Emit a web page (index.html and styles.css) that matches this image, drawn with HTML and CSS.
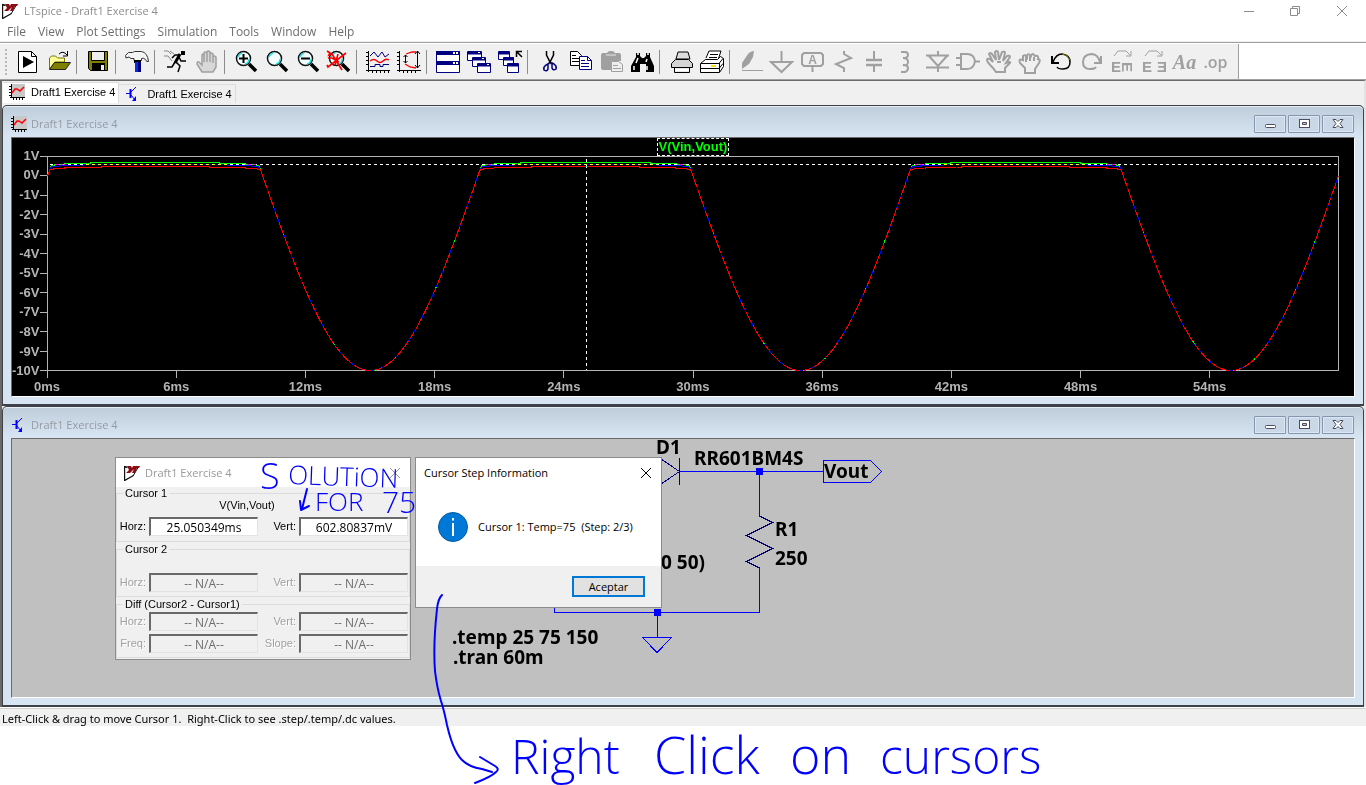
FILE: index.html
```html
<!DOCTYPE html>
<html lang="en">
<head>
<meta charset="utf-8">
<title>LTspice - Draft1 Exercise 4</title>
<link rel="stylesheet" href="styles.css">
</head>
<body>
<svg class="defs" aria-hidden="true">
  <symbol id="logo" viewBox="0 0 16 16"><path d="M.5 1v14.500l9-5M.5 1.500l3 1" fill="none" stroke="#111" stroke-width="1.400"/><path d="M9 11l6-10" stroke="#111"/><path d="M3 1h4l1 2 1-2h7l-1 2h-2l-2 5H8l2-4-4 4H2l3-3z" fill="#8b0a14"/></symbol>
  <symbol id="wave" viewBox="0 0 16 16"><path d="M2 0h14v13H2z" fill="#c8c8c8"/><path d="M2.500 0v14M1 13.500h15M0 2.500h2M0 5.500h2M0 8.500h2M0 11.500h2M4.500 14v2M7.500 14v2M10.500 14v2M13.500 14v2" stroke="#000" fill="none" shape-rendering="crispEdges"/><path d="M3 9l3-4 2 0 3 2 4-4" stroke="#f00" stroke-width="1.500" fill="none"/></symbol>
  <symbol id="bjt" viewBox="0 0 16 16"><path d="M1 7.500h4M6 6l5-5M6 9l4 5" stroke="#00f" fill="none"/><path d="M5.500 3v9" stroke="#00f" stroke-width="2"/><path d="M11 10v5H7z" fill="#00f"/></symbol>
  <symbol id="lens" viewBox="0 0 24 24"><circle cx="9.500" cy="8.500" r="7" fill="#f4ffff" stroke="#111" stroke-width="1.500"/><path d="M4 7q1-3 4-4M11 14q4-1 4-5" stroke="#20e0e8" stroke-width="1.500" fill="none"/><path d="M15 14l7 7" stroke="#000" stroke-width="3.500"/></symbol>
  <symbol id="min" viewBox="0 0 16 14"><rect x="3.500" y="7.500" width="10" height="3" rx="1" fill="#fff" stroke="#4a4d60"/></symbol>
  <symbol id="max" viewBox="0 0 16 14"><rect x="3.500" y="2.500" width="10" height="8" fill="#fff" stroke="#4a4d60"/><path d="M6.500 5.500h4v2h-4z" fill="#bcc8d8" stroke="#4a4d60"/></symbol>
  <symbol id="cls" viewBox="0 0 16 14"><path d="M3 2.500h3l2 2 2-2h3l-3 4 3 4h-3l-2-2-2 2H3l3-4z" fill="#fff" stroke="#4a4d60"/></symbol>
  <symbol id="cross" viewBox="0 0 12 12"><path d="M1 1l10 10M11 1L1 11" stroke="currentColor" fill="none"/></symbol>
</svg>

<div class="app">
  <header class="titlebar">
    <svg class="logo"><use href="#logo"/></svg>
    <h1>LTspice - Draft1 Exercise 4</h1>
    <div class="syscontrols">
      <button aria-label="Minimize"><svg viewBox="0 0 12 12"><path d="M1 6.500h10" stroke="currentColor"/></svg></button>
      <button aria-label="Restore"><svg viewBox="0 0 12 12"><path d="M3.500 3V1.500h7v7H9M1.500 3.500h7v7h-7z" fill="none" stroke="currentColor"/></svg></button>
      <button aria-label="Close"><svg><use href="#cross"/></svg></button>
    </div>
  </header>
  <nav class="menu">
    <button>File</button><button>View</button><button>Plot Settings</button><button>Simulation</button><button>Tools</button><button>Window</button><button>Help</button>
  </nav>

  <div class="toolrow">
  <div class="toolbar" role="toolbar" aria-label="Main">
    <span class="grip"></span>
    <button aria-label="Run file"><svg viewBox="0 0 24 24"><path d="M2.500 1.500h13l5 5v16h-18z" fill="#fff" stroke="#000"/><path d="M15.500 1.500v5h5" fill="none" stroke="#000"/><path d="M7 6l11 6-11 6z"/></svg></button>
    <button aria-label="Open"><svg viewBox="0 0 24 24"><path d="M2.500 19V8l2-2h4l2 2h7v4H8z" fill="#ffff9a" stroke="#777700"/><path d="M2.500 19.500l5-7h16l-5 7z" fill="#808000" stroke="#222"/><path d="M12 4q4-4 8 1M20.500 1v5H16" fill="none" stroke="#000"/></svg></button>
    <i></i>
    <button aria-label="Save"><svg viewBox="0 0 24 24"><path d="M2.500 1.500h19v19h-17l-2-2z" fill="#808000" stroke="#000"/><path d="M5.500 1.500h13v9h-13z" fill="#eee" stroke="#000"/><path d="M6 13h13v8H6z"/><path d="M15 15h3v5h-3z" fill="#eee"/></svg></button>
    <i></i>
    <button aria-label="Control panel"><svg viewBox="0 0 24 24"><path d="M.5 5.500l3-3h4l2-1h7q6 1 7 10-2 1-3-2-2-2-4-1v2H9v-2H6L4 7 1 8z" fill="#f4f4f4" stroke="#333"/><path d="M9 10h7v3H9z"/><path d="M10 12h6v10h-6z" fill="#0030e0"/><path d="M13 12h3v10h-3z" fill="#000080"/></svg></button>
    <i></i>
    <button aria-label="Run"><svg viewBox="0 0 24 24"><path d="M17 1h4v4h-4z"/><path d="M16 4l-5 9" stroke="#000" stroke-width="3"/><path d="M16 5h-5L8 8M15 7l2 4h5M12 12l4 4-2 6M11 12l-3 5H3" stroke="#000" stroke-width="1.500" fill="none"/><path d="M0 1h4l3 3M0 6h4l4 5M6 1l4 3" stroke="#888" fill="none"/></svg></button>
    <button aria-label="Halt"><svg viewBox="0 0 24 24"><path d="M7 22l-5-8q0-3 2-2l3 3V5q1-2 2 0v7V3q1-2 3 0v9V2q1-2 3 0v10V4q1-2 3 0v9-6q1-2 3 0v10l-3 5z" fill="#d8d8d8" stroke="#a0a0a0" stroke-width="1.500"/></svg></button>
    <i></i>
    <button aria-label="Zoom in"><svg viewBox="0 0 24 24"><use href="#lens"/><path d="M5 8.500h9M9.500 4v9" stroke="#000" stroke-width="2"/></svg></button>
    <button aria-label="Pan"><svg viewBox="0 0 24 24"><use href="#lens"/></svg></button>
    <button aria-label="Zoom out"><svg viewBox="0 0 24 24"><use href="#lens"/><path d="M5 8.500h9" stroke="#000" stroke-width="2"/></svg></button>
    <button aria-label="Zoom extents"><svg viewBox="0 0 24 24"><use href="#lens"/><path d="M0 1l3 2-1 2 3-1 10 16M19 3L1 17l-1-2M1 8h4l7 4M11 4l-3 11" stroke="#f00" stroke-width="1.700" fill="none"/></svg></button>
    <i></i>
    <button aria-label="Autorange"><svg viewBox="0 0 24 24"><path d="M2.500 1v21M0 20.500h24M0 2.500h2M0 6.500h2M0 10.500h2M0 14.500h2M6.500 20v3M10.500 20v3M14.500 20v3M18.500 20v3M22.500 20v3" stroke="#000"/><path d="M4 6l4-4 4 5 4-5 3 5 4-3M4 16.500h5v-2h5v2h3v-2h6" fill="none" stroke="#000080"/><path d="M4 11q4-3 7 0t6 0 6-1" fill="none" stroke="#f00" stroke-width="1.500"/></svg></button>
    <button aria-label="Plot limits"><svg viewBox="0 0 24 24"><path d="M2.500 1v21M0 20.500h24M0 2.500h2M0 6.500h2M0 10.500h2M0 14.500h2M6.500 20v3M10.500 20v3M14.500 20v3M18.500 20v3M20.500 1v17M18 4l2.500-3 2.500 3M18 15l2.500 3 2.500-3M8.500 5v8M6.500 7l2-2 2 2M6.500 11l2 2 2-2" fill="none" stroke="#000"/><path d="M9 4l6-2h4M8 14l5 3 6 1" fill="none" stroke="#f00" stroke-width="1.300"/></svg></button>
    <i></i>
    <button aria-label="Tile windows"><svg viewBox="0 0 24 24"><path d="M.5 1.500h23v21H.5z" fill="#fff" stroke="#000080"/><path d="M0 1h24v4H0zM0 11h24v4H0z" fill="#000080"/><path d="M17 2h2v2h-2zM20 2h2v2h-2zM17 12h2v2h-2zM20 12h2v2h-2z" fill="#fff"/></svg></button>
    <button aria-label="Cascade windows"><svg viewBox="0 0 24 24"><g fill="#fff" stroke="#000080"><path d="M.5 1.500h14v9H.5z"/><path d="M1 3h13" stroke-width="3"/><path d="M5.500 7.500h13v9h-13z"/><path d="M6 9h12" stroke-width="3"/><path d="M10.500 13.500h13v9h-13z"/><path d="M11 15h12" stroke-width="3"/></g><path d="M11 2h2v1h-2zM15 8h2v1h-2zM20 14h2v1h-2z" fill="#fff"/></svg></button>
    <button aria-label="Close all windows"><svg viewBox="0 0 24 24"><g fill="#fff" stroke="#000080"><path d="M.5 1.500h11v8H.5z"/><path d="M1 3h10" stroke-width="3"/><path d="M5.500 7.500h10v8h-10z"/><path d="M6 9h10" stroke-width="3"/><path d="M9.500 13.500h11v9h-11z"/><path d="M10 15h10" stroke-width="3"/></g><path d="M18.500 7V1.500H24M19 2l5 5" stroke="#000" stroke-width="1.500" fill="none"/></svg></button>
    <i></i>
    <button aria-label="Cut"><svg viewBox="0 0 24 24"><path d="M9.500 1v4l3 6 2 3M16.500 1v4l-3 6-2 3" stroke="#000" stroke-width="1.500" fill="none"/><path d="M11 14l-2 1q-3 2-2 5 3 2 4-1zM15 13l2 1q3 2 2 5-3 2-4-1z" stroke="#000080" stroke-width="1.500" fill="none"/></svg></button>
    <button aria-label="Copy"><svg viewBox="0 0 24 24"><path d="M2.500 1.500h7l4 4v10h-11z" fill="#fff" stroke="#000"/><path d="M4 5.500h4M4 8.500h7M4 11.500h7" stroke="#000"/><path d="M11.500 6.500h8l4 4v9h-12z" fill="#fff" stroke="#000080"/><path d="M19.500 6.500v4h4M13 10.500h4M13 13.500h8M13 16.500h8" fill="none" stroke="#000080"/></svg></button>
    <button aria-label="Paste"><svg viewBox="0 0 24 24"><path d="M3 3h5q1-2 3-2h2q2 0 3 2h4q2 0 2 2v6H12v9H4q-2 0-2-2V5z" fill="#a0a0a0"/><path d="M7 5h10" stroke="#e8e8e8"/><path d="M12.500 11.500h7l4 3v7h-11z" fill="#eee" stroke="#a0a0a0"/><path d="M14 15.500h5M14 18.500h8" stroke="#a0a0a0"/></svg></button>
    <button aria-label="Find"><svg viewBox="0 0 24 24"><path d="M6 3h4v3l2 2h2l2-2V3h4v4l4 9v6h-8v-8h-6v8H1v-6l5-9z"/><path d="M7 4h2M17 4h2M4 16v4M17 16v4M8 8l-2 5M17 9l-1 3" stroke="#fff" stroke-width="1.500"/></svg></button>
    <i></i>
    <button aria-label="Print"><svg viewBox="0 0 24 24"><path d="M7 9l2-7h10l2 7z" fill="#ddd" stroke="#000"/><path d="M2.500 17.500v-4l4-4h13l4 4v4h-3v5h-15v-5z" fill="#d4d4d4" stroke="#000"/><path d="M3 17.500h20" stroke="#000"/><path d="M6 20h14" stroke="#fff" stroke-width="3"/></svg></button>
    <button aria-label="Print setup"><svg viewBox="0 0 24 24"><path d="M6 8l3-7h12l-3 9" fill="#fff" stroke="#000"/><path d="M10 4.500h8M9 7.500h8" stroke="#000"/><path d="M.5 13.500l5-4h12l3-3 3 2v8l-4 6H.5z" fill="#fff" stroke="#000"/><path d="M1 13.500h18l4-5M19.500 13v9M1 18.500h18l4-5" fill="none" stroke="#000"/><path d="M11 15h5v2h-5z" fill="#fd0"/></svg></button>
    <i></i>
    <button aria-label="Wire" disabled><svg viewBox="0 0 24 24"><path d="M7 7q3-6 8-6l-1 6-4 7-7 5V13z" fill="#a0a0a0"/><path d="M3 20.500h21" stroke="#a0a0a0"/></svg></button>
    <button aria-label="Ground" disabled><svg viewBox="0 0 24 24" class="g"><path d="M11.500 1v11M1 12h21L11.500 22z"/></svg></button>
    <button aria-label="Label net" disabled><svg viewBox="0 0 24 24" class="g"><path d="M3 3h17l2 2v9l-2 2H3l-2-2V5zM11.500 16v6" stroke-width="2"/><text x="11.500" y="14" text-anchor="middle" class="ga">A</text></svg></button>
    <button aria-label="Resistor" disabled><svg viewBox="0 0 24 24" class="g"><path d="M12 1v3l7 4-15 6 8 4v4"/></svg></button>
    <button aria-label="Capacitor" disabled><svg viewBox="0 0 24 24" class="g"><path d="M11 1v9M11 15v7" stroke-width="2"/><path d="M3 10h16M3 15h16" stroke-width="2.500"/></svg></button>
    <button aria-label="Inductor" disabled><svg viewBox="0 0 24 24" class="g"><path d="M7 2h4q3 0 3 3t-5 3q5 0 5 4t-5 3q5 0 5 3t-3 4H7" stroke-width="2"/></svg></button>
    <button aria-label="Diode" disabled><svg viewBox="0 0 24 24" class="g"><path d="M13 1v4M1 5.500h23M4 6l9 10 9-10M1 17.500h23M13 16v6" stroke-width="2"/></svg></button>
    <button aria-label="Component" disabled><svg viewBox="0 0 24 24" class="g"><path d="M5 4h6q7 0 8 7-1 8-8 8H5zM0 8h5M0 15h5M19 11.500h5" stroke-width="2"/></svg></button>
    <button aria-label="Move" disabled><svg viewBox="0 0 24 24" class="g"><path d="M6 18q-6-6-6-8t3-1l3 3-4-8q1-2 3 0l4 6-1-8q2-2 3 0l1 8 3-8q3-1 3 1l-2 8 4-5q3-1 3 1l-4 6q5-2 4 0l-5 5v4H9zM10 12h4"/></svg></button>
    <button aria-label="Drag" disabled><svg viewBox="0 0 24 24" class="g"><path d="M7 18l-5-5q-2-5 3-3V6q2-2 4 1 0-5 4-1 1-4 4 0 4-1 3 3 3 0 1 4l-4 6v4H7zM8 12V7M12 11V6M16 11V7"/></svg></button>
    <button aria-label="Undo"><svg viewBox="0 0 24 24"><path d="M4 12q3-8 9-8 8 1 8 8t-7 7q-5 0-6-2" fill="none" stroke="#000" stroke-width="1.500"/><path d="M3 6v7h7" fill="none" stroke="#000" stroke-width="2"/><path d="M13 4q5 0 8 6" stroke="#808000" fill="none"/></svg></button>
    <button aria-label="Redo" disabled><svg viewBox="0 0 24 24" class="g"><path d="M20 12q-2-8-9-8-8 1-8 8t7 7q5 0 6-2M21 6v7h-7"/></svg></button>
    <button aria-label="Rotate" disabled><svg viewBox="0 0 24 24" class="g"><path d="M3 6l4-5h8l4 4M20 1v5h-5" class="thin"/><text x="0" y="22" class="ge">E</text><text transform="translate(11 12) rotate(90)" class="ge">E</text></svg></button>
    <button aria-label="Mirror" disabled><svg viewBox="0 0 24 24" class="g"><path d="M3 6l4-5h8l4 4M20 1v5h-5" class="thin"/><text x="0" y="22" class="ge">E</text><text transform="translate(25 22) scale(-1 1)" class="ge">E</text></svg></button>
    <button class="txt italic" disabled>Aa</button>
    <button class="txt" disabled>.op</button>
  </div>
  </div>

  <div class="mdi">
    <div class="tabs" role="tablist">
      <button role="tab" aria-selected="true" class="active"><svg><use href="#wave"/></svg>Draft1 Exercise 4</button>
      <button role="tab" aria-selected="false"><svg><use href="#bjt"/></svg>Draft1 Exercise 4</button>
    </div>

    <section class="child">
      <div class="caption">
        <svg><use href="#wave"/></svg><h2>Draft1 Exercise 4</h2>
        <button aria-label="Minimize"><svg><use href="#min"/></svg></button><button aria-label="Maximize"><svg><use href="#max"/></svg></button><button aria-label="Close"><svg><use href="#cls"/></svg></button>
      </div>
      <div class="client plot">
        <div class="trace"><span>V(Vin,Vout)</span></div>
        <div class="yaxis"><span>1V</span><span>0V</span><span>-1V</span><span>-2V</span><span>-3V</span><span>-4V</span><span>-5V</span><span>-6V</span><span>-7V</span><span>-8V</span><span>-9V</span><span>-10V</span></div>
        <svg id="graph" viewBox="0 0 1292 215" preserveAspectRatio="none" shape-rendering="crispEdges" fill="none"></svg>
        <div class="xaxis"><span>0ms</span><span>6ms</span><span>12ms</span><span>18ms</span><span>24ms</span><span>30ms</span><span>36ms</span><span>42ms</span><span>48ms</span><span>54ms</span></div>
      </div>
    </section>

    <section class="child">
      <div class="caption">
        <svg><use href="#bjt"/></svg><h2>Draft1 Exercise 4</h2>
        <button aria-label="Minimize"><svg><use href="#min"/></svg></button><button aria-label="Maximize"><svg><use href="#max"/></svg></button><button aria-label="Close"><svg><use href="#cls"/></svg></button>
      </div>
      <div class="client schematic">
        <svg class="circuit" viewBox="12 439 900 258">
          <g fill="none" stroke="#00f" shape-rendering="crispEdges">
            <path d="M679.500 471.500H823M759.500 471v45M759.500 568v44.500H554.500V600M657.500 612v26"/>
            <path d="M823.500 460.500h47l11 11-11 11h-47zM642.500 637.500h29l-14.500 15z"/>
          </g>
          <g fill="none" stroke="#000080" shape-rendering="crispEdges">
            <path d="M661 459l18.500 12.500L661 484M679.500 458v27M759.500 516l13 6.500-26 13 26 13-26 13 13 6.500"/>
          </g>
          <path d="M756 468h7v7h-7zM654 609h7v7h-7z" fill="#00f"/>
          <g class="ctext">
            <text x="656" y="454">D1</text><text x="694" y="465">RR601BM4S</text><text x="824" y="478">Vout</text>
            <text x="775" y="536">R1</text><text x="775" y="565">250</text><text x="661" y="569">0 50)</text>
            <text x="452" y="644">.temp 25 75 150</text><text x="453" y="664">.tran 60m</text>
          </g>
        </svg>

        <form class="dialog cursors">
          <div class="dtitle"><svg class="logo"><use href="#logo"/></svg><h3>Draft1 Exercise 4</h3><button type="button" aria-label="Close"><svg><use href="#cross"/></svg></button></div>
          <fieldset class="first">
            <legend>Cursor 1</legend>
            <p>V(Vin,Vout)</p>
            <div class="fields">
              <label for="h1">Horz:</label><input id="h1" value="25.050349ms"><label for="v1">Vert:</label><input id="v1" value="602.80837mV">
            </div>
          </fieldset>
          <fieldset class="off">
            <legend>Cursor 2</legend>
            <p></p>
            <div class="fields">
              <label for="h2">Horz:</label><input id="h2" value="-- N/A--" disabled><label for="v2">Vert:</label><input id="v2" value="-- N/A--" disabled>
            </div>
          </fieldset>
          <fieldset class="off last">
            <legend>Diff (Cursor2 - Cursor1)</legend>
            <div class="fields">
              <label for="h3">Horz:</label><input id="h3" value="-- N/A--" disabled><label for="v3">Vert:</label><input id="v3" value="-- N/A--" disabled>
              <label for="f3">Freq:</label><input id="f3" value="-- N/A--" disabled><label for="s3">Slope:</label><input id="s3" value="-- N/A--" disabled>
            </div>
          </fieldset>
        </form>

        <div class="dialog message" role="dialog" aria-labelledby="mt">
          <div class="dtitle"><h3 id="mt">Cursor Step Information</h3><button aria-label="Close"><svg><use href="#cross"/></svg></button></div>
          <div class="mbody">
            <svg viewBox="0 0 30 30"><circle cx="15" cy="15" r="14.500" fill="#0078d7" stroke="#005a9e"/><path d="M15 11v13M15 6v2.500" stroke="#fff" stroke-width="2"/></svg>
            <p>Cursor 1: Temp=75&nbsp; (Step: 2/3)</p>
          </div>
          <div class="mfoot"><button>Aceptar</button></div>
        </div>
      </div>
    </section>
  </div>
  <footer class="status">Left-Click &amp; drag to move Cursor 1.&nbsp; Right-Click to see .step/.temp/.dc values.</footer>

  <svg class="ink" viewBox="0 0 1366 785">
    <g fill="none" stroke="#00f" stroke-width="2" stroke-linecap="round" stroke-linejoin="round">
      <path d="M307 489l-5 20M300 501l1 9 8-4"/>
      <path d="M442 595q-4 4-5 14-4 36-2 62 2 17 6 30 3 9 6 24 6 26 15 35 7 7 20 9l10 3M480 757l15 9q5 3 1 6-5 5-21 11"/>
    </g>
    <text x="260" y="489" class="s36">S</text>
    <text transform="translate(288 484) rotate(2)" class="s26">OLUTiON</text>
    <text x="315" y="511" class="s26">FOR</text>
    <text x="382" y="513" class="s30">75</text>
    <text y="774"><tspan x="511" class="s48">Right</tspan> <tspan x="654" class="s52">Click</tspan> <tspan x="790" class="s52">on</tspan> <tspan x="880" class="s48">cursors</tspan></text>
  </svg>
</div>
<script src="plot.js"></script>
</body>
</html>
```
FILE: styles.css
```css
* { box-sizing: border-box; }
body { margin: 0; background: #fff; font: 11px/14px "Open Sans", "Noto Sans", sans-serif; color: #000; }
h1, h2, h3, p { margin: 0; font-size: inherit; font-weight: 400; }
button { font: inherit; color: inherit; background: none; border: 0; padding: 0; }
svg { display: block; flex: none; }
.defs { width: 0; height: 0; position: absolute; }
.app { position: relative; min-height: 100vh; overflow: hidden; }

.titlebar { display: flex; align-items: center; height: 22px; padding-left: 2px; color: #8c8c8c; }
.titlebar h1 { margin-left: 6px; flex: 1; }
.logo { width: 16px; height: 16px; }
.syscontrols { display: flex; }
.syscontrols button { width: 46px; height: 20px; display: grid; place-items: center; }
.syscontrols svg { width: 12px; height: 12px; }
.syscontrols button:last-child { width: 48px; }
.menu { display: flex; gap: 12px; height: 20px; padding: 0 7px; color: #6d6d6d; font-size: 12px; border-bottom: 1px solid #f0f0f0; }
.menu button { height: 20px; }

.toolrow { border-top: 1px solid #a0a0a0; padding-top: 1px; display: flex; border-bottom: 1px solid #a0a0a0; }
.toolbar { display: flex; align-items: center; height: 35px; background: #f0f0f0; border-right: 1px solid #a0a0a0; padding-right: 7px; }
.toolbar button { width: 31px; height: 31px; display: grid; place-items: center; }
.toolbar button svg { width: 24px; height: 24px; overflow: visible; }
.toolbar i { width: 8px; height: 24px; border-left: 1px solid #8c8c8c; margin-left: 2px; margin-right: -2px; }
.grip { width: 2px; height: 26px; margin: 0 5px; background: repeating-linear-gradient(#b8b8b8 0 2px, #f0f0f0 2px 4px); }
.g { fill: none; stroke: #a0a0a0; stroke-width: 2px; }
.g .thin { stroke-width: 1px; }
.g text { fill: #a0a0a0; stroke: none; font-family: "Liberation Sans", sans-serif; font-weight: 700; }
.ga { font-size: 12px; }
.ge { font-size: 15px; }
.toolbar .txt { color: #a0a0a0; font: 600 16px/20px "Open Sans", sans-serif; }
.toolbar .italic { font: italic 700 20px/20px "Liberation Serif", serif; }

.mdi { border-top: 1px solid #696969; border-left: 2px solid #696969; border-right: 2px solid #e3e3e3; background: #f0f0f0; }
.tabs { display: flex; align-items: flex-end; height: 24px; padding: 1px 0 2px 1px; font: 11px/14px "Liberation Sans", Arial, sans-serif; }
.tabs button { display: flex; align-items: center; gap: 6px; height: 19px; padding: 0 3px 0 6px; border: 1px solid #dcdcdc; border-width: 1px 1px 0 0; }
.tabs svg { width: 16px; height: 16px; }
.tabs .active { background: #fff; height: 21px; padding-bottom: 3px; }

.child { border: 1px solid #3e4248; border-bottom-width: 2px; border-radius: 5px 5px 0 0; background: linear-gradient(#bfcddb, #d7e4f2 30px); padding: 0 8px 7px; box-shadow: inset 0 1px #e6eef6; }
.caption { display: flex; align-items: center; gap: 2px; height: 31px; padding: 4px 1px 0 0; }
.caption > svg { width: 16px; height: 16px; }
.caption h2 { flex: 1; margin-left: 2px; color: #959ba3; }
.caption button { width: 32px; height: 18px; border: 1px solid #8496b0; border-radius: 1px; display: grid; place-items: center; background: #c9d7e6; box-shadow: inset 0 0 0 1px #dce7f2; }
.caption button svg { width: 16px; height: 14px; }
.client { height: 260px; border: 1px solid #6a6a6a; border-right-color: #fff; border-bottom-color: #fff; position: relative; }

.plot { background: #000; color: #b4b4b4; display: grid; grid-template: 18px 215px 1fr / 35px 1fr 15px; font: 700 13px/16px "Liberation Sans", Arial, sans-serif; }
.trace { grid-area: 1 / 2; justify-self: center; color: #0f0; }
.trace span { display: block; height: 18px; padding: 0 1px; border: 1px dashed #fff; white-space: nowrap; }
.yaxis { grid-area: 2 / 1; display: grid; grid-auto-rows: 1fr; margin: -10px 0; text-align: right; padding-right: 8px; align-items: center; white-space: nowrap; justify-items: end; }
.plot svg { grid-area: 2 / 2; width: 100%; height: 100%; overflow: visible; }
.plot path, .plot polyline, .plot rect { vector-effect: non-scaling-stroke; }
.cursor { mix-blend-mode: difference; }
.xaxis { grid-area: 3 / 2; display: grid; grid-template-columns: repeat(10, 10%); margin-left: -5%; width: 100%; text-align: center; padding-top: 8px; }

.schematic { background: #c0c0c0; }
.circuit { width: 900px; height: 258px; overflow: visible; }
.ctext { font: 700 19px "Noto Sans", sans-serif; }
.dialog { position: absolute; background: #fff; border: 1px solid #8b8b8b; }
.dtitle { display: flex; align-items: center; height: 29px; padding: 0 9px 0 8px; }
.dtitle h3 { flex: 1; }
.dtitle button svg { width: 12px; height: 12px; }
.cursors { left: 103px; top: 18px; width: 296px; height: 203px; background: #f0f0f0; font: 11px/13px "Liberation Sans", Arial, sans-serif; }
.cursors .dtitle { background: #fff; color: #999; font-family: "Open Sans", "Noto Sans", sans-serif; }
.cursors h3 { margin-left: 5px; }
fieldset { margin: 0 0 1px; border: 1px solid #dcdcdc; padding: 0 0 4px; min-width: 0; }
legend { margin-left: 6px; padding: 0 2px; height: 13px; }
fieldset p { height: 17px; text-align: center; padding-right: 32px; line-height: 11px; }
.first { padding-bottom: 5px; }
.last { padding-top: 1px; }
.fields { display: grid; grid-template-columns: 29px 1fr 35px 1fr; gap: 3px; align-items: center; padding-right: 1px; }
.fields label { text-align: right; white-space: nowrap; }
.off label { color: #a0a0a0; text-shadow: 1px 1px #fff; }
.fields input { width: 100%; height: 19px; min-width: 0; border: 1px solid #e3e3e3; border-top: 2px solid #696969; border-left: 2px solid #696969; background: #fff; padding: 0; text-align: center; font: 12px/15px "Open Sans", "Noto Sans", sans-serif; color: #000; }
.fields input:disabled { background: #f0f0f0; color: #6d6d6d; }

.message { left: 403px; top: 18px; width: 247px; }
.mbody { display: flex; align-items: center; gap: 10px; height: 79px; padding-left: 22px; white-space: nowrap; }
.mbody svg { width: 30px; height: 30px; }
.mfoot { background: #f0f0f0; height: 41px; display: flex; justify-content: flex-end; align-items: center; padding-right: 16px; }
.mfoot button { width: 73px; height: 21px; background: #e1e1e1; border: 2px solid #0078d7; }

.status { background: #f0f0f0; border-top: 1px solid #d0d0d0; height: 18px; padding: 3px 2px 0; margin-top: 1px; font-family: "Noto Sans", sans-serif; }
.ink { position: absolute; left: 0; top: 0; width: 1366px; height: 785px; pointer-events: none; font-family: "Open Sans", sans-serif; font-weight: 300; fill: #00f; }
.s26 { font-size: 26px; }
.s30 { font-size: 30px; }
.s36 { font-size: 36px; }
.s48 { font-size: 48px; }
.s52 { font-size: 52px; }
```
FILE: plot.js
```js
const graph = document.getElementById('graph');
const W = 1291, H = 214;
const yOf = v => 0.5 + (1 - v) * H / 11;

// Diode drop limits the positive half wave, the negative half follows the source.
function trace(limit, softness, color, dash) {
  const halves = [];
  let last = null;
  let prev = null;
  for (let x = 0; x <= W; x++) {
    const s = Math.sin(2 * Math.PI * (x / W) * 3);
    const v = s <= 0 ? 10 * s : Math.min(10 * s, limit + softness * Math.log(s));
    const point = (x + 0.5) + ',' + yOf(v).toFixed(1);
    const clamped = s > 0;
    if (!last || last.clamped !== clamped) {
      last = { clamped, pts: prev ? [prev] : [] };
      halves.push(last);
    }
    last.pts.push(point);
    prev = point;
  }
  return halves.map(h =>
    `<polyline points="${h.pts.join(' ')}" stroke="${color}"` +
    (h.clamped ? '' : ` stroke-dasharray="${dash}"`) + '/>').join('');
}

let ticks = '';
for (let i = 0; i <= 11; i++) ticks += `M-7 ${Math.round(i * H / 11) + 0.5}H0`;
for (let i = 0; i < 10; i++) ticks += `M${Math.round(i * W / 10) + 0.5} ${H}v8`;

graph.innerHTML =
  `<rect x=".5" y=".5" width="${W}" height="${H}" stroke="#b4b4b4"/>` +
  `<path d="${ticks}" stroke="#b4b4b4"/>` +
  trace(0.7, 0.06, '#0f0', 'none') +
  trace(0.6, 0.05, '#00f', '9 2 15 3 21 2') +
  trace(0.48, 0.05, '#f00', '13 3 19 4 7 3') +
  `<path class="cursor" d="M3 8.500H1291" stroke="#fff" stroke-dasharray="3 3"/>` +
  `<path class="cursor" d="M539.500 3V214" stroke="#fff" stroke-dasharray="3 3"/>`;
```
